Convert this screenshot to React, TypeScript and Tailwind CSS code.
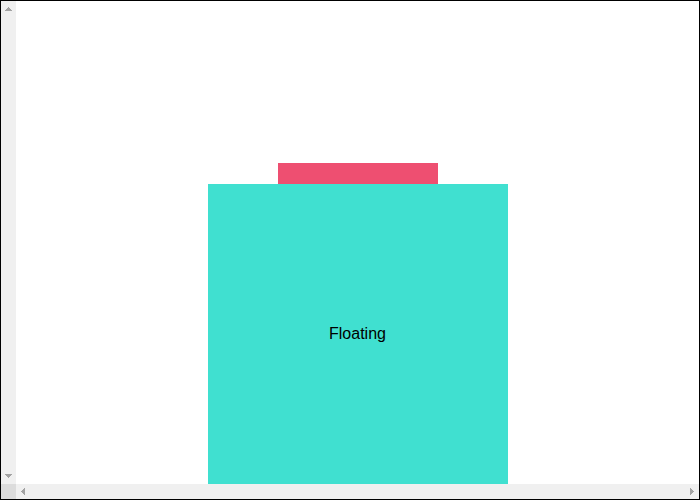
function Arrow({ d }: { d: string }) {
  return (
    <svg
      aria-hidden="true"
      viewBox="0 0 15 15"
      shapeRendering="crispEdges"
      className="size-[15px] shrink-0 fill-[#a3a3a3]"
    >
      <path d={d} />
    </svg>
  );
}

export default function App() {
  return (
    <div className="flex h-[calc(100vh-1px)] flex-col border border-black bg-white font-['Liberation_Sans',Arial,sans-serif] text-base text-black">
      <div className="flex min-h-0 flex-1">
        <div className="flex w-[15px] shrink-0 flex-col justify-between bg-[#f0f0f0]">
          <Arrow d="M7 6h1v1h1v1h1v1h1v1H4V9h1V8h1V7h1z" />
          <Arrow d="M4 5h7v1h-1v1H9v1H8v1H7V8H6V7H5V6H4z" />
        </div>
        <main className="flex min-w-0 flex-1 flex-col items-center justify-end overflow-hidden">
          <div className="h-[21px] w-40 bg-[#ee4f71]" />
          <div className="flex size-[300px] items-center justify-center bg-[#40e0d0]">
            Floating
          </div>
        </main>
      </div>
      <div className="flex h-[15px] shrink-0 bg-[#f0f0f0]">
        <div className="w-[15px] bg-[#dcdcdc]" />
        <div className="flex flex-1 justify-between">
          <Arrow d="M9 4v7H8v-1H7V9H6V8H5V7h1V6h1V5h1V4z" />
          <Arrow d="M6 4h1v1h1v1h1v1h1v1H9v1H8v1H7v1H6z" />
        </div>
      </div>
    </div>
  );
}
